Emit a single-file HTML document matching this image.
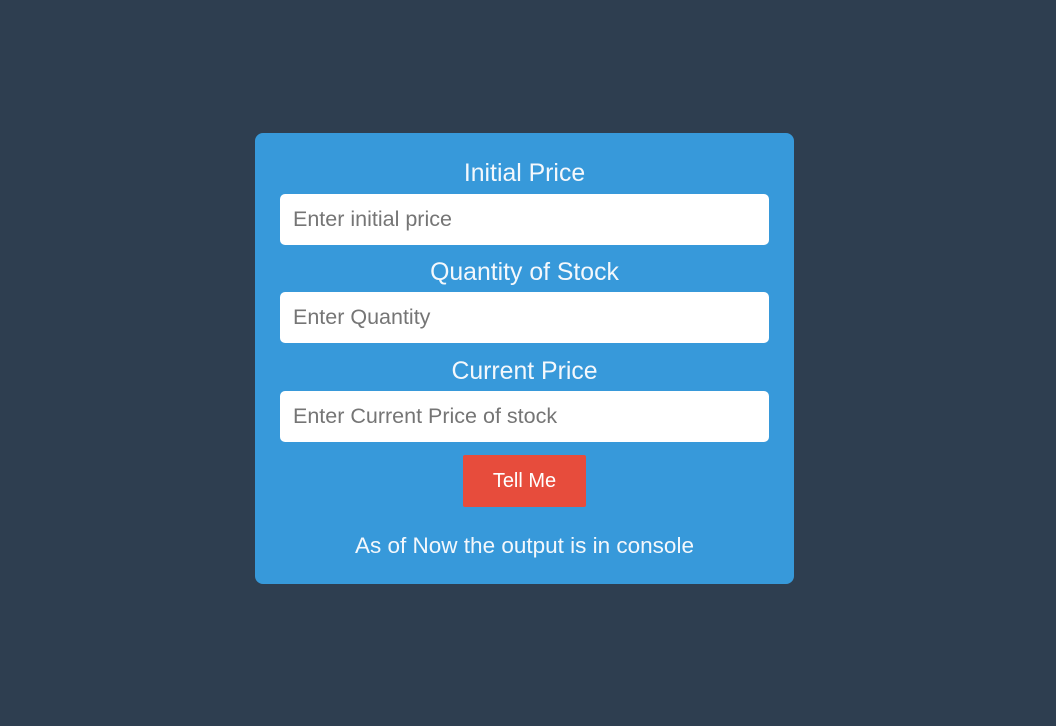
<!DOCTYPE html>
<html><head><style>
html,body{margin:0;padding:0;}
body{width:1056px;height:726px;background:#2e3e50;font-family:"Liberation Sans",sans-serif;position:relative;overflow:hidden;}
.card{position:absolute;left:255px;top:133px;width:539px;height:451px;background:#3799da;border-radius:8px;}
.lbl{position:absolute;left:0;width:539px;text-align:center;color:#f4f8fc;font-size:24.8px;line-height:28px;}
.inp{position:absolute;left:25px;width:489px;height:51px;background:#fff;border-radius:5px;color:#757575;font-size:21.5px;line-height:51px;box-sizing:border-box;padding-left:13px;}
.btn{position:absolute;left:208px;top:322px;width:123px;height:52px;background:#e74c3c;border-radius:2px;color:#fff;font-size:20px;text-align:center;line-height:52px;}
</style></head><body>
<div class="card">
<div class="lbl" style="top:27px">Initial Price</div>
<div class="inp" style="top:61px">Enter initial price</div>
<div class="lbl" style="top:126px">Quantity of Stock</div>
<div class="inp" style="top:159px">Enter Quantity</div>
<div class="lbl" style="top:225px">Current Price</div>
<div class="inp" style="top:258px">Enter Current Price of stock</div>
<div class="btn">Tell Me</div>
<div class="lbl" style="top:399px;font-size:22.5px">As of Now the output is in console</div>
</div>
</body></html>
